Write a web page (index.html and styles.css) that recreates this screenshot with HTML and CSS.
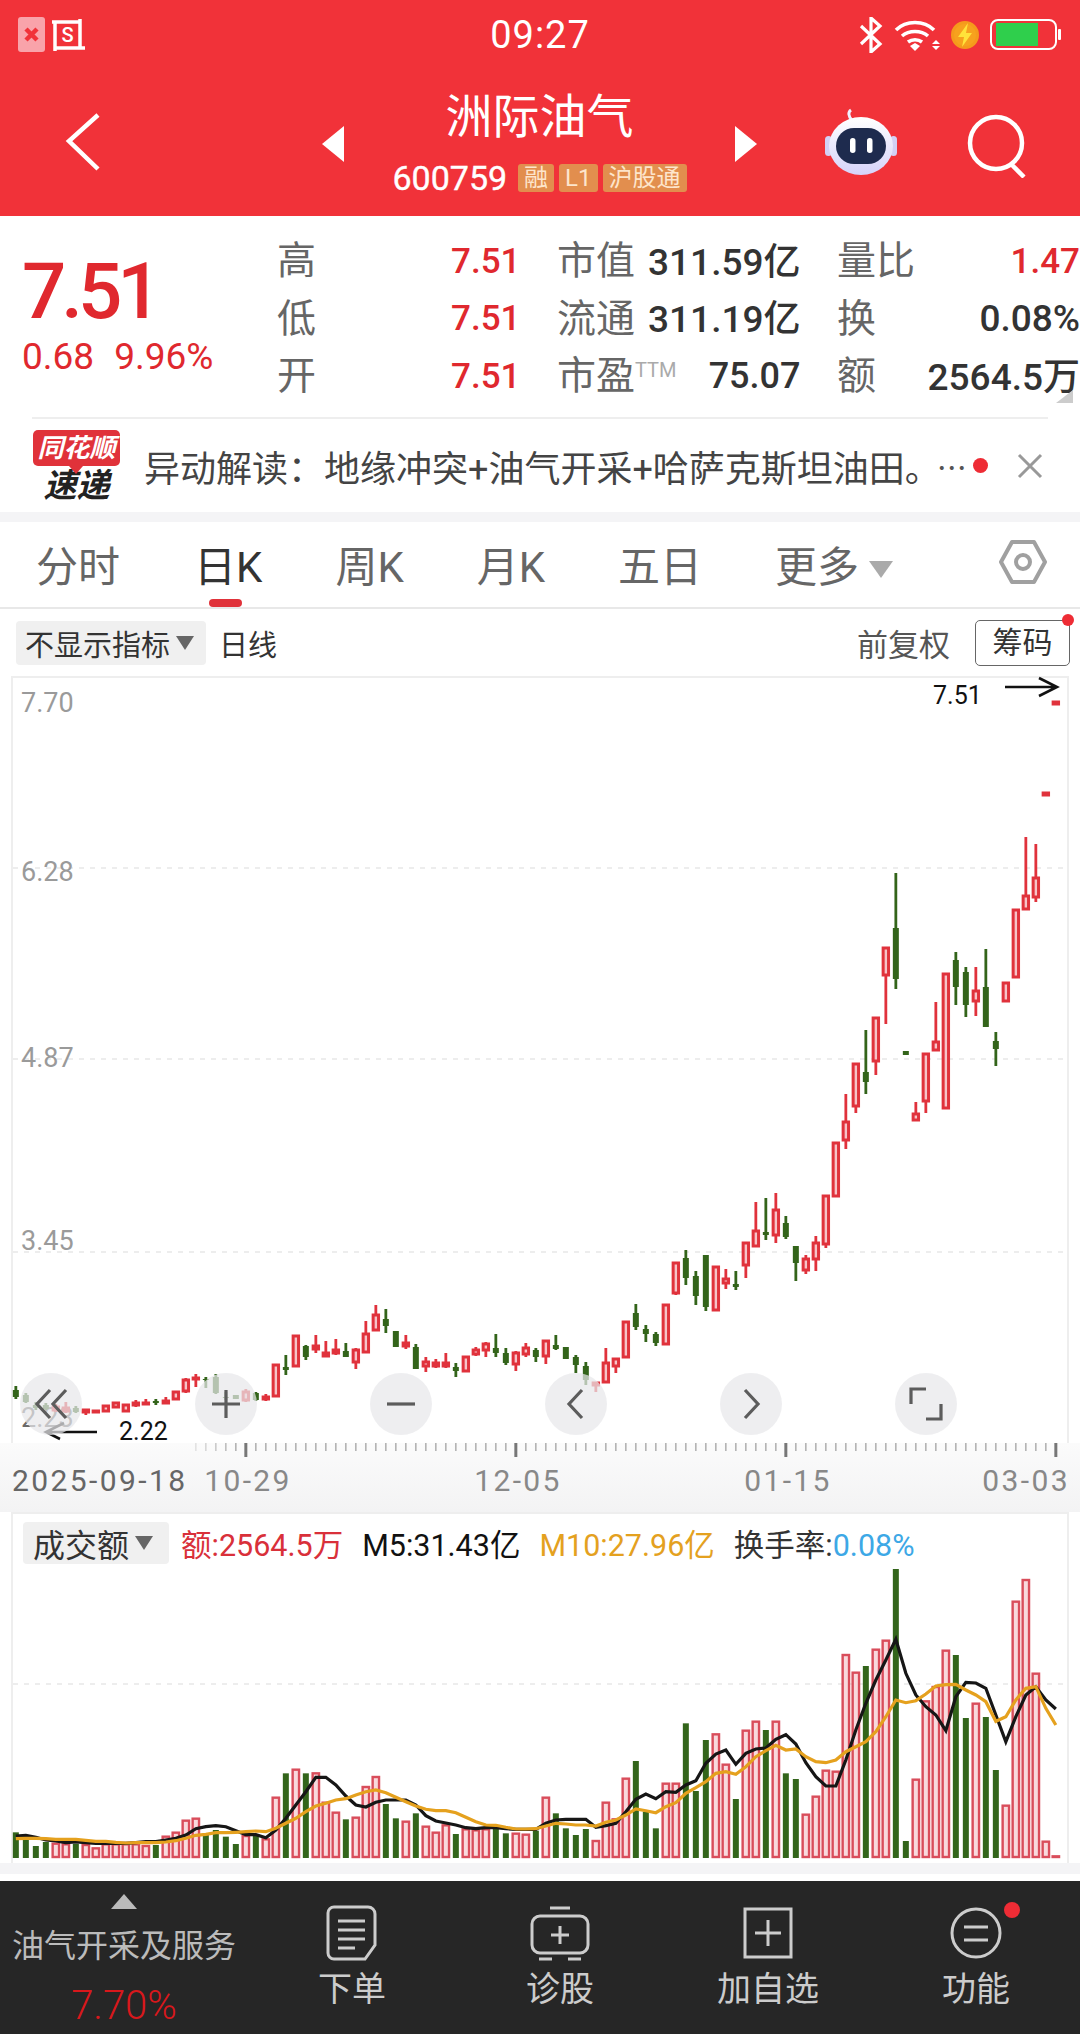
FILE: index.html
```html
<!DOCTYPE html>
<html lang="zh">
<head>
    <meta charset="utf-8">
    <title>洲际油气</title>
    <link rel="stylesheet" href="styles.css">
</head>
<body>
    <header class="top">
        <div class="status">
            <div class="status-left">
                <svg width="68" height="36" viewBox="0 0 68 36">
                    <rect x="0" y="0" width="27" height="35" rx="3" fill="#f9a3aa"/>
                    <path d="M8 12l11 11M19 12L8 23" stroke="#f13239" stroke-width="4.5" fill="none"/>
                    <path d="M37 5h25v26H37zM34 5h6M62 2v6M60 31h7M37 31v3" stroke="#fff" stroke-width="3.5" fill="none"/>
                    <text x="49.5" y="25" class="snap-s">S</text>
                </svg>
            </div>
            <div class="clock">09:27</div>
            <div class="status-right">
                <svg width="24" height="36" viewBox="0 0 24 36">
                    <path d="M2 9l19 18-9 8V1l9 8L2 27" stroke="#fff" stroke-width="3.2" fill="none"/>
                </svg>
                <svg width="46" height="32" viewBox="0 0 46 32">
                    <path d="M2 11C12 1 30 1 40 11M8 17c7-6 19-6 26 0M14 23c4-3 10-3 14 0" stroke="#fff" stroke-width="3.6" fill="none"/>
                    <path d="M16 27l5-3 5 3-5 5z" fill="#fff"/>
                    <path d="M38 25l4-4 4 4zM38 27h8l-4 4z" fill="#fff"/>
                </svg>
                <svg width="28" height="30" viewBox="0 0 28 30">
                    <circle cx="14" cy="15" r="12.5" fill="#f7a11e" stroke="#f59a1c" stroke-width="3"/>
                    <path d="M17 3L7 17h6l-2 10 10-14h-6z" fill="#ffe23a"/>
                </svg>
                <svg width="72" height="32" viewBox="0 0 72 32">
                    <rect x="1" y="1" width="65" height="29" rx="7" fill="none" stroke="#fff" stroke-width="2"/>
                    <rect x="6" y="4" width="42" height="23" fill="#2fcf4c"/>
                    <rect x="68" y="10" width="3" height="11" rx="1" fill="#fff"/>
                </svg>
            </div>
        </div>
        <div class="nav">
            <svg class="back" width="36" height="60" viewBox="0 0 36 60">
                <path d="M33 3L4 29l29 28" stroke="#fff" stroke-width="4.5" fill="none"/>
            </svg>
            <div class="tri tri-left"></div>
            <div class="title-block">
                <div class="stock-name">洲际油气</div>
                <div class="stock-sub">
                    <span class="stock-code">600759</span>
                    <span class="tag">融</span>
                    <span class="tag">L1</span>
                    <span class="tag">沪股通</span>
                </div>
            </div>
            <div class="tri tri-right"></div>
            <svg class="robot" width="72" height="68" viewBox="0 0 72 68">
                <defs>
                    <linearGradient id="shell" x1="0" y1="0" x2="0" y2="1">
                        <stop offset="0" stop-color="#ffffff"/>
                        <stop offset="1" stop-color="#d6d3fa"/>
                    </linearGradient>
                </defs>
                <path d="M27 12C23 8 23 4 26 2" stroke="#f0f0ff" stroke-width="3" fill="none"/>
                <rect x="0" y="28" width="7" height="20" rx="3.5" fill="#d3d0f5"/>
                <rect x="65" y="28" width="7" height="20" rx="3.5" fill="#d3d0f5"/>
                <ellipse cx="36" cy="38" rx="32" ry="29" fill="url(#shell)"/>
                <rect x="11" y="20" width="50" height="36" rx="18" fill="#1e2b4e"/>
                <rect x="25" y="30" width="5.5" height="15" rx="2.7" fill="#fff"/>
                <rect x="42" y="30" width="5.5" height="15" rx="2.7" fill="#fff"/>
            </svg>
            <svg class="search" width="64" height="64" viewBox="0 0 64 64">
                <circle cx="30" cy="29" r="26" stroke="#fff" stroke-width="4.5" fill="none"/>
                <path d="M45 50l13 13" stroke="#fff" stroke-width="4.5" fill="none"/>
            </svg>
        </div>
    </header>

    <section class="quote">
        <div class="price">
            <div class="price-now">7.51</div>
            <div class="price-change"><span>0.68</span><span>9.96%</span></div>
        </div>
        <div class="stats">
            <div class="stat"><span class="stat-label">高</span><span class="num up">7.51</span></div>
            <div class="stat"><span class="stat-label">市值</span><span>311.59亿</span></div>
            <div class="stat"><span class="stat-label">量比</span><span class="num up">1.47</span></div>
            <div class="stat"><span class="stat-label">低</span><span class="num up">7.51</span></div>
            <div class="stat"><span class="stat-label">流通</span><span>311.19亿</span></div>
            <div class="stat"><span class="stat-label">换</span><span class="num">0.08%</span></div>
            <div class="stat"><span class="stat-label">开</span><span class="num up">7.51</span></div>
            <div class="stat"><span class="stat-label">市盈<sup class="ttm">TTM</sup></span><span class="num pe">75.07</span></div>
            <div class="stat"><span class="stat-label">额</span><span>2564.5万</span></div>
        </div>
        <div class="corner"></div>
    </section>

    <section class="alert">
        <div class="flash">
            <div class="flash-top">同花顺</div>
            <div class="flash-bottom">速递</div>
        </div>
        <div class="alert-text">异动解读：地缘冲突+油气开采+哈萨克斯坦油田。</div>
        <div class="alert-more">…</div>
        <div class="red-dot"></div>
        <svg class="alert-close" width="26" height="26" viewBox="0 0 26 26">
            <path d="M2 2l22 22M24 2L2 24" stroke="#999" stroke-width="3" fill="none"/>
        </svg>
    </section>

    <div class="band"></div>

    <nav class="tabs">
        <div class="tab">分时</div>
        <div class="tab active">日K</div>
        <div class="tab">周K</div>
        <div class="tab">月K</div>
        <div class="tab">五日</div>
        <div class="tab">更多<i class="caret caret-more"></i></div>
        <svg class="hex" width="48" height="46" viewBox="0 0 48 46">
            <path d="M13 3h22l11 20-11 20H13L2 23z" stroke="#a0a0a0" stroke-width="4" stroke-linejoin="round" fill="none"/>
            <circle cx="24" cy="23" r="7" stroke="#a0a0a0" stroke-width="4" fill="none"/>
        </svg>
    </nav>

    <div class="toolbar">
        <div class="chip">不显示指标<i class="caret"></i></div>
        <div class="period">日线</div>
        <div class="adjust">前复权</div>
        <div class="chips-btn">筹码<span class="btn-dot"></span></div>
    </div>

    <div class="chart">
        <svg id="kline" class="plot" width="1054" height="765" viewBox="13 678 1054 765"></svg>
        <div class="controls">
            <div class="ctl"><svg width="62" height="62" viewBox="0 0 62 62"><path d="M30 17L17 31l13 14M46 17L33 31l13 14" class="ctl-line"/></svg></div>
            <div class="ctl"><svg width="62" height="62" viewBox="0 0 62 62"><path d="M31 17v28M17 31h28" class="ctl-line"/></svg></div>
            <div class="ctl"><svg width="62" height="62" viewBox="0 0 62 62"><path d="M17 31h28" class="ctl-line"/></svg></div>
            <div class="ctl"><svg width="62" height="62" viewBox="0 0 62 62"><path d="M37 17L24 31l13 14" class="ctl-line"/></svg></div>
            <div class="ctl"><svg width="62" height="62" viewBox="0 0 62 62"><path d="M25 17l13 14-13 14" class="ctl-line"/></svg></div>
            <div class="ctl"><svg width="62" height="62" viewBox="0 0 62 62"><path d="M31 16H16v15M31 46h15V31" class="ctl-line"/></svg></div>
        </div>
    </div>

    <div class="axis">
        <svg id="ticks" class="plot" width="1080" height="16" viewBox="0 0 1080 16"></svg>
        <div class="dates">
            <span class="date-first">2025-09-18</span>
            <span>10-29</span>
            <span>12-05</span>
            <span>01-15</span>
            <span class="date-last">03-03</span>
        </div>
    </div>

    <section class="volume">
        <div class="legend">
            <div class="chip chip-vol">成交额<i class="caret"></i></div>
            <span class="lg-red">额:2564.5万</span>
            <span class="lg-black">M5:31.43亿</span>
            <span class="lg-orange">M10:27.96亿</span>
            <span class="lg-turn">换手率:<b>0.08%</b></span>
        </div>
        <svg id="vol" class="plot" width="1054" height="295" viewBox="13 1568 1054 295"></svg>
    </section>

    <div class="band band-low"></div>

    <footer class="bottom">
        <div class="sector">
            <i class="sector-arrow"></i>
            <div class="sector-name">油气开采及服务</div>
            <div class="sector-rate">7.70%</div>
        </div>
        <div class="action">
            <svg width="52" height="56" viewBox="0 0 52 56">
                <path d="M8 2h34a7 7 0 0 1 7 7v31L39 54H8a6 6 0 0 1-6-6V8a6 6 0 0 1 6-6z" class="foot-line"/>
                <path d="M12 16h27M12 25h27M12 34h27M12 43h17" class="foot-line"/>
            </svg>
            <span>下单</span>
        </div>
        <div class="action">
            <svg width="60" height="56" viewBox="0 0 60 56">
                <path d="M20 3h20" class="foot-line"/>
                <rect x="2" y="11" width="56" height="37" rx="8" class="foot-line"/>
                <path d="M30 21v18M21 30h18M9 54h13M38 54h13" class="foot-line"/>
            </svg>
            <span>诊股</span>
        </div>
        <div class="action">
            <svg width="50" height="52" viewBox="0 0 50 52">
                <rect x="2" y="2" width="46" height="48" class="foot-line"/>
                <path d="M25 13v26M12 26h26" class="foot-line"/>
            </svg>
            <span>加自选</span>
        </div>
        <div class="action action-dot">
            <svg width="52" height="52" viewBox="0 0 52 52">
                <circle cx="26" cy="26" r="24" class="foot-line"/>
                <path d="M14 20h24M14 33h24" class="foot-line"/>
            </svg>
            <span>功能</span>
            <i class="foot-dot"></i>
        </div>
    </footer>

    <script src="chart.js"></script>
</body>
</html>
```

FILE: styles.css
```css
* {
    box-sizing: border-box;
}

body {
    margin: 0;
    width: 1080px;
    height: 2034px;
    overflow: hidden;
    background: #fff;
    color: #333;
    font-family: Roboto, "Noto Sans CJK SC", sans-serif;
}

.top {
    height: 216px;
    background: #f13239;
    color: #fff;
}

.status {
    height: 70px;
    display: grid;
    grid-template-columns: 1fr auto 1fr;
    align-items: center;
    padding: 0 18px;
}

.status-left {
    display: flex;
}

.snap-s {
    font-size: 20px;
    font-weight: 500;
    fill: #fff;
    text-anchor: middle;
}

.clock {
    font-size: 38px;
    letter-spacing: 1px;
}

.status-right {
    display: flex;
    justify-content: flex-end;
    align-items: center;
    gap: 11px;
}

.nav {
    height: 146px;
    display: flex;
    align-items: flex-start;
}

.back {
    margin: 42px 0 0 65px;
}

.tri {
    width: 0;
    height: 0;
    margin-top: 56px;
    border-top: 18px solid transparent;
    border-bottom: 18px solid transparent;
}

.tri-left {
    margin-left: 221px;
    border-right: 22px solid #fff;
}

.tri-right {
    border-left: 22px solid #fff;
}

.title-block {
    width: 391px;
    display: flex;
    flex-direction: column;
    align-items: center;
    padding-top: 18px;
}

.stock-name {
    font-size: 47px;
    line-height: 58px;
}

.stock-sub {
    display: flex;
    align-items: center;
    gap: 5px;
    margin-top: 18px;
}

.stock-code {
    font-size: 34px;
    line-height: 28px;
    margin-right: 6px;
    -webkit-text-stroke: 0.4px #fff;
}

.tag {
    height: 28px;
    padding: 0 6px;
    background: #e28e4e;
    color: #fde5cc;
    border-radius: 3px;
    font-size: 24px;
    line-height: 28px;
}

.robot {
    margin: 38px 0 0 68px;
}

.search {
    margin: 44px 0 0 69px;
}

.quote {
    position: relative;
    height: 201px;
    display: flex;
}

.price {
    width: 277px;
    padding: 33px 0 0 22px;
}

.price-now {
    font-size: 78px;
    line-height: 86px;
    font-weight: 500;
    letter-spacing: -5px;
    color: #e0282e;
}

.price-change {
    display: flex;
    gap: 20px;
    margin-top: 1px;
    font-size: 37px;
    line-height: 42px;
    color: #e0282e;
}

.stats {
    width: 803px;
    padding-top: 14px;
    display: grid;
    grid-template-columns: 243.5px 243.5px 243px;
    grid-auto-rows: 57.5px;
    column-gap: 36.5px;
    font-size: 37px;
    font-weight: 500;
    color: #333;
}

.stat {
    display: flex;
    justify-content: space-between;
    align-items: center;
    white-space: nowrap;
}

.stat-label {
    padding-bottom: 3px;
    font-size: 39px;
    font-weight: 400;
    color: #666;
}

.num {
    padding-top: 5px;
}

.up {
    font-size: 35px;
    color: #e0282e;
}

.pe {
    font-size: 36px;
}

.ttm {
    font-size: 20px;
    color: #aaa;
    vertical-align: 12px;
    line-height: 0;
}

.corner {
    position: absolute;
    right: 7px;
    bottom: 14px;
    width: 0;
    height: 0;
    border-bottom: 13px solid #ccc;
    border-left: 17px solid transparent;
}

.alert {
    margin: 0 32px;
    height: 95px;
    border-top: 2px solid #eee;
    display: flex;
    align-items: center;
}

.alert > * {
    flex: none;
}

.flash {
    width: 87px;
    margin-left: 1px;
}

.flash-top {
    position: relative;
    height: 36px;
    background: #e0323a;
    border-radius: 5px;
    color: #fff;
    font-size: 26px;
    font-weight: 700;
    font-style: italic;
    line-height: 36px;
    text-align: center;
    white-space: nowrap;
}

.flash-top::after {
    content: "";
    position: absolute;
    left: 36px;
    bottom: -8px;
    border-top: 8px solid #e0323a;
    border-left: 7px solid transparent;
    border-right: 7px solid transparent;
}

.flash-bottom {
    margin-top: 4px;
    height: 32px;
    color: #222;
    font-size: 33px;
    font-weight: 700;
    font-style: italic;
    line-height: 32px;
    text-align: center;
    white-space: nowrap;
}

.alert-text {
    margin-left: 24px;
    font-size: 36px;
    color: #444;
    white-space: nowrap;
}

.alert-more {
    margin-left: -4px;
    font-family: "Noto Sans CJK SC", sans-serif;
    font-size: 30px;
    color: #555;
}

.red-dot {
    width: 15px;
    height: 15px;
    margin-left: 6px;
    border-radius: 50%;
    background: #ee2c35;
}

.alert-close {
    margin-left: 29px;
}

.band {
    height: 10px;
    background: #f4f4f6;
}

.tabs {
    position: relative;
    height: 87px;
    display: flex;
    align-items: flex-start;
    gap: 73px;
    padding: 22px 0 0 36px;
    border-bottom: 2px solid #e8e8e8;
    font-size: 42px;
    color: #666;
}

.tab {
    position: relative;
    line-height: 48px;
    white-space: nowrap;
}

.tab:first-child {
    margin-right: 1px;
}

.tab.active {
    color: #333;
}

.tab.active::after {
    content: "";
    position: absolute;
    left: 15px;
    top: 55px;
    width: 33px;
    height: 8px;
    border-radius: 4px;
    background: #e0323a;
}

.hex {
    position: absolute;
    right: 33px;
    top: 17px;
}

.caret {
    display: inline-block;
    margin-left: 6px;
    vertical-align: 3px;
    border-top: 14px solid #666;
    border-left: 9px solid transparent;
    border-right: 9px solid transparent;
}

.caret-more {
    margin-left: 10px;
    vertical-align: 4px;
    border-top: 17px solid #aaa;
    border-left: 12px solid transparent;
    border-right: 12px solid transparent;
}

.toolbar {
    height: 67px;
    display: flex;
    align-items: center;
    padding: 0 10px 0 16px;
}

.chip {
    width: 190px;
    height: 44px;
    padding: 0 9px;
    display: flex;
    align-items: center;
    background: #f0f0f0;
    border-radius: 4px;
    font-size: 29px;
    color: #333;
    white-space: nowrap;
}

.period {
    margin-left: 13px;
    font-size: 29px;
    color: #333;
}

.adjust {
    margin-left: auto;
    font-size: 31px;
    color: #555;
}

.chips-btn {
    position: relative;
    width: 95px;
    height: 46px;
    margin-left: 25px;
    border: 1px solid #666;
    border-radius: 5px;
    font-size: 30px;
    line-height: 44px;
    text-align: center;
    color: #333;
}

.btn-dot {
    position: absolute;
    right: -5px;
    top: -7px;
    width: 12px;
    height: 12px;
    border-radius: 50%;
    background: #ee2c35;
}

.chart {
    position: relative;
    height: 767px;
    margin: 0 11px;
    border: 2px solid #eee;
    border-bottom: 0;
}

.plot {
    display: block;
    overflow: visible;
}

.grid-line {
    stroke: #e8e8e8;
    stroke-width: 1.5;
    stroke-dasharray: 5 6;
}

.y-label {
    font-size: 27px;
    fill: #9a9a9a;
}

.y-label-low {
    fill: #6a6a6a;
}

.mark-label {
    font-size: 25px;
    fill: #111;
}

.mark-arrow {
    stroke: #111;
    stroke-width: 2.6;
    fill: none;
}

.wick-r {
    stroke: #e0323c;
    stroke-width: 2.8;
}

.wick-g {
    stroke: #33641a;
    stroke-width: 2.8;
}

.body-r {
    stroke: #e0323c;
    stroke-width: 3;
    fill: #f7c3c8;
}

.body-g {
    fill: #33641a;
}

.controls {
    position: absolute;
    left: 7px;
    top: 695px;
    display: flex;
    gap: 113px;
}

.ctl {
    width: 62px;
    height: 62px;
    border-radius: 50%;
    background: rgba(232, 232, 234, 0.72);
}

.ctl-line {
    stroke: #5c5c5c;
    stroke-width: 3.2;
    fill: none;
}

.axis {
    position: relative;
    height: 69px;
    background: linear-gradient(#fbfbfb, #f3f3f4);
}

.tick {
    stroke: #a8a8a8;
    stroke-width: 1.4;
}

.tick-major {
    stroke: #777;
    stroke-width: 3;
}

.dates {
    display: grid;
    grid-template-columns: 101px 270px 270px 270px 147px;
    padding: 3px 0 0 12px;
    font-size: 30px;
    line-height: 38px;
    letter-spacing: 2.4px;
    color: #888;
    text-align: center;
    white-space: nowrap;
}

.date-first {
    text-align: left;
    color: #666;
}

.date-last {
    text-align: right;
}

.volume {
    height: 351px;
    margin: 0 11px;
    border: 2px solid #eee;
    border-width: 2px 2px 0;
}

.legend {
    height: 54px;
    display: flex;
    align-items: center;
    padding: 4px 0 0 10px;
    font-size: 30.5px;
    white-space: nowrap;
}

.chip-vol {
    width: 146px;
    height: 42px;
    padding: 0 0 0 10px;
    margin-right: 12px;
    font-size: 32px;
}

.lg-red {
    color: #d9303a;
}

.lg-black {
    margin-left: 19px;
    color: #111;
}

.lg-orange {
    margin-left: 19px;
    color: #e4a11f;
}

.lg-turn {
    margin-left: 19px;
    color: #333;
}

.lg-turn b {
    font-weight: 400;
    color: #3da8e6;
}

.vol-r {
    stroke: #d94d5b;
    stroke-width: 2.4;
    fill: #f9d9dd;
}

.vol-g {
    fill: #33651b;
}

.ma5 {
    stroke: #161616;
    stroke-width: 3.2;
    fill: none;
}

.ma10 {
    stroke: #e5a11e;
    stroke-width: 3.2;
    fill: none;
}

.band-low {
    height: 11px;
    margin-bottom: 7px;
}

.bottom {
    height: 153px;
    display: grid;
    grid-template-columns: 248px repeat(4, 208px);
    background: #262626;
    color: #ccc;
}

.sector {
    display: flex;
    flex-direction: column;
    align-items: center;
    padding-top: 13px;
}

.sector-arrow {
    border-bottom: 15px solid #bbb;
    border-left: 13px solid transparent;
    border-right: 13px solid transparent;
}

.sector-name {
    margin-top: 15px;
    font-size: 32px;
    line-height: 44px;
    color: #bbb;
    white-space: nowrap;
}

.sector-rate {
    margin-top: 16px;
    font-size: 40px;
    font-weight: 300;
    line-height: 44px;
    color: #d8181c;
}

.action {
    position: relative;
    display: flex;
    flex-direction: column;
    align-items: center;
    padding-top: 24px;
    font-size: 34px;
}

.action svg {
    height: 56px;
}

.action span {
    margin-top: 4px;
    line-height: 48px;
}

.foot-line {
    stroke: #ccc;
    stroke-width: 3;
    fill: none;
}

.foot-dot {
    position: absolute;
    left: 132px;
    top: 21px;
    width: 16px;
    height: 16px;
    border-radius: 50%;
    background: #ee2c35;
}
```

FILE: chart.js
```js
// daily candles: colour, body top, body bottom, wick top, wick bottom (page y, px)
const candles = [
    ['g',1390,1397,1386,1399],['g',1395,1402,1393,1403],['g',1405,1408,1402,1410],['g',1405,1409,1403,1410],['r',1406,1411,1404,1412],
    ['r',1407,1412,1402,1413],['g',1408,1412,1406,1413],['r',1409,1413,1409,1415],['r',1410,1412],['r',1405,1412],
    ['r',1402,1408],['r',1404,1412],['r',1402,1406,1400,1407],['r',1402,1404,1399,1404],['g',1401,1403,1399,1405],
    ['r',1400,1404,1397,1404],['r',1391,1400],['r',1379,1392,1378,1393],['r',1377,1379,1374,1387],['g',1379,1380,1377,1388],
    ['g',1377,1393,1374,1394],['g',1397,1398,1392,1400],['g',1395,1399],['r',1391,1401,1389,1402],['g',1393,1400,1392,1401],
    ['r',1396,1400,1394,1401],['r',1364,1397],['g',1367,1370,1355,1375],['r',1335,1367],['g',1346,1357,1345,1360],
    ['r',1345,1350,1335,1353],['r',1352,1357,1341,1357],['r',1349,1354,1339,1355],['g',1351,1357,1343,1357],['r',1349,1363,1348,1369],
    ['r',1333,1353,1321,1353],['r',1314,1331,1305,1331],['g',1319,1326,1309,1333],['g',1331,1347],['r',1342,1347,1335,1349],
    ['g',1347,1369,1344,1369],['r',1361,1367,1357,1372],['r',1362,1367,1359,1368],['r',1362,1367,1353,1368],['g',1367,1371,1363,1377],
    ['r',1356,1372],['r',1349,1355,1347,1356],['r',1343,1351,1342,1357],['g',1348,1353,1334,1357],['g',1353,1363,1348,1365],
    ['r',1352,1365,1351,1371],['r',1347,1355,1343,1357],['g',1350,1357,1348,1362],['r',1340,1357,1340,1364],['g',1345,1349,1335,1350],
    ['g',1347,1359],['g',1357,1365,1355,1373],['g',1366,1380,1362,1385],['r',1382,1386,1382,1392],['r',1362,1383,1348,1383],
    ['r',1358,1367,1358,1373],['r',1321,1358],['g',1313,1327,1304,1330],['g',1329,1334,1325,1342],['g',1334,1343,1332,1346],
    ['r',1304,1345],['r',1262,1294,1262,1295],['g',1258,1278,1250,1285],['g',1276,1296,1271,1305],['g',1255,1307,1255,1311],
    ['r',1266,1311],['r',1278,1284,1269,1289],['g',1284,1287,1271,1290],['r',1242,1266,1242,1278],['r',1230,1247,1202,1247],
    ['g',1232,1235,1198,1240],['r',1209,1236,1193,1243],['g',1223,1237,1216,1239],['g',1246,1263,1246,1281],['r',1258,1271,1255,1274],
    ['r',1242,1260,1236,1271],['r',1195,1245,1195,1248],['r',1142,1197],['r',1121,1141,1094,1149],['r',1063,1107,1063,1113],
    ['g',1072,1082,1030,1094],['r',1017,1062,1017,1075],['r',947,976,947,1024],['g',928,979,873,989],['g',1051,1055],
    ['r',1113,1121,1102,1121],['r',1053,1102,1053,1113],['r',1041,1051,1002,1051],['r',973,1109],['g',960,987,952,1005],
    ['g',972,1005,967,1017],['r',990,1002,967,1016],['g',987,1027,949,1027],['g',1041,1049,1032,1066],['r',982,1002],
    ['r',909,978],['r',895,910,837,910],['r',877,898,844,902],['r',792,796],['r',701,705]
];

// volume bars and averages, measured as 3 x (y - 1560)
const vols = ('g817 g840 g858 g846 r848 r850 g852 r852 r862 r850 r850 r850 r850 r855 g855 r827 r815 r779 r773 g820 ' +
    'g810 g830 g852 r825 g825 r835 r710 g640 r626 g640 r637 r725 r755 g778 r770 r678 r648 g732 g775 r782 ' +
    'g760 r797 r815 r793 g822 r805 r808 r805 g805 g820 r818 r821 g812 r710 g760 g805 g825 g807 r840 r725 ' +
    'r775 r653 g603 g755 g805 r668 r668 g490 g693 g540 r520 r611 g717 r509 r482 g510 r482 g640 g657 r761 ' +
    'r707 r629 r632 r282 r335 g318 r266 r239 g27 g843 r656 r421 r378 r269 g285 g474 r428 g471 g630 r734 ' +
    'r122 r57 r338 r842 r886').split(' ');

const ma5 = [828,826,832,840,843,848,846,848,850,850,850,850,848,845,845,840,835,825,806,800,797,800,812,824,824,833,810,775,735,695,
    652,652,675,708,735,741,727,720,720,720,735,767,783,789,795,803,806,803,803,806,808,808,808,
    790,780,778,778,778,802,797,790,755,718,702,716,695,697,675,662,610,582,570,613,580,567,564,538,524,552,608,650,678,678,600,
    510,430,360,300,238,340,405,440,465,512,410,367,369,385,465,545,470,405,380,420,447];

const ma10 = [836,835,835,836,838,838,838,841,844,844,847,849,848,848,848,846,842,835,826,823,818,818,817,815,813,815,805,790,775,755,
    738,730,720,716,705,695,690,698,712,725,738,748,752,752,758,772,785,795,796,802,807,807,806,
    798,790,792,795,795,798,787,780,765,747,752,758,740,728,700,683,665,640,635,643,620,590,572,556,570,567,590,605,608,600,575,
    560,545,515,470,420,428,422,402,378,374,373,390,405,425,484,470,420,385,380,445,495];

const SVG_NS = 'http://www.w3.org/2000/svg';

function add(parent, tag, cls, attrs, text) {
    const el = document.createElementNS(SVG_NS, tag);
    if (cls) el.setAttribute('class', cls);
    for (const k in attrs) el.setAttribute(k, attrs[k]);
    if (text) el.textContent = text;
    parent.appendChild(el);
    return el;
}

function barX(i) {
    return 15.84 + 10 * i;
}

function volY(z) {
    return 1560 + z / 3;
}

function drawKline() {
    const svg = document.getElementById('kline');

    [868, 1059, 1252].forEach(y => {
        add(svg, 'line', 'grid-line', { x1: 13, x2: 1067, y1: y, y2: y });
    });

    [['7.70', 712], ['6.28', 881], ['4.87', 1067], ['3.45', 1250]].forEach(([t, y]) => {
        add(svg, 'text', 'y-label', { x: 21, y: y }, t);
    });
    add(svg, 'text', 'y-label y-label-low', { x: 21, y: 1427 }, '2.23');

    candles.forEach((c, i) => {
        const x = barX(i);
        const wickTop = c[3] === undefined ? c[1] : c[3];
        const wickBot = c[4] === undefined ? c[2] : c[4];
        add(svg, 'line', 'wick-' + c[0], { x1: x, x2: x, y1: wickTop, y2: wickBot });
        if (c[0] === 'r') {
            add(svg, 'rect', 'body-r', { x: x - 2.7, y: c[1] + 1, width: 5.4, height: Math.max(c[2] - c[1] - 2, 1) });
        } else {
            add(svg, 'rect', 'body-g', { x: x - 3, y: c[1], width: 6, height: c[2] - c[1] });
        }
    });

    add(svg, 'text', 'mark-label', { x: 933, y: 704 }, '7.51');
    add(svg, 'path', 'mark-arrow', { d: 'M1005 687H1057M1039 678L1057 687L1039 696' });
    add(svg, 'text', 'mark-label', { x: 119, y: 1440 }, '2.22');
    add(svg, 'path', 'mark-arrow', { d: 'M97 1432H46M64 1423L46 1432L60 1439' });
}

function drawTicks() {
    const svg = document.getElementById('ticks');
    for (let i = 18; i <= 104; i++) {
        const x = barX(i);
        const major = (i - 23) % 27 === 0;
        const fade = Math.min((x - 176) / 60, 1);
        add(svg, 'line', major ? 'tick-major' : 'tick', { x1: x, x2: x, y1: 0, y2: major ? 14 : 8, opacity: fade });
    }
}

function drawVolume() {
    const svg = document.getElementById('vol');
    const base = 1858;

    add(svg, 'line', 'grid-line', { x1: 13, x2: 1067, y1: 1684, y2: 1684 });

    vols.forEach((v, i) => {
        const x = barX(i);
        const y = volY(+v.slice(1));
        if (v[0] === 'r') {
            add(svg, 'rect', 'vol-r', { x: x - 3.2, y: y + 1, width: 6.4, height: base - y - 2 });
        } else {
            add(svg, 'rect', 'vol-g', { x: x - 3, y: y, width: 6, height: base - y });
        }
    });

    [[ma5, 'ma5'], [ma10, 'ma10']].forEach(([line, cls]) => {
        const pts = line.map((z, i) => barX(i) + ',' + volY(z).toFixed(1)).join(' ');
        add(svg, 'polyline', cls, { points: pts });
    });
}

drawKline();
drawTicks();
drawVolume();
```
